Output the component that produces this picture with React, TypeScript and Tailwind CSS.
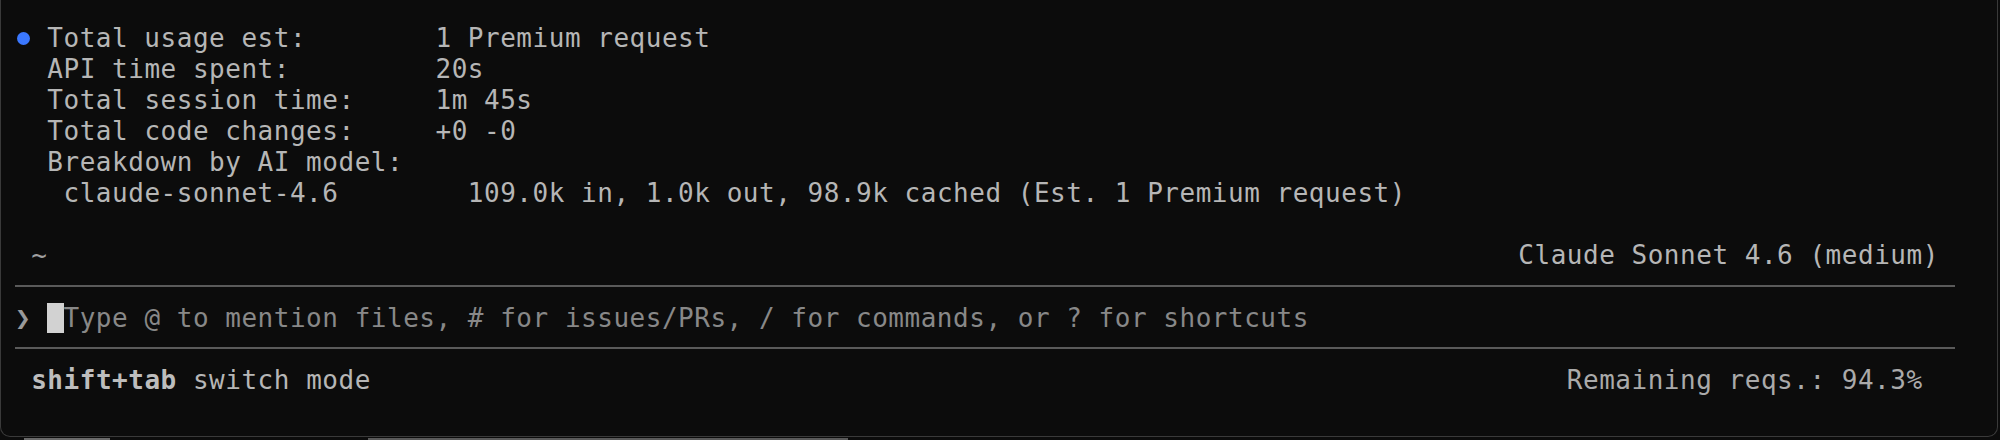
import React from "react";

const Row = ({ children, className = "" }: { children?: React.ReactNode; className?: string }) => (
  <div className={`flex h-[31.07px] w-[1940px] items-center pt-[8px] ${className}`}>{children}</div>
);

const Sep = () => (
  <div className="flex h-[31.07px] w-[1940px] items-center pt-[6px]">
    <div className="h-[2px] w-full bg-[#5a5a5a]" />
  </div>
);

const stat = (label: string, value = "") => "  " + label.padEnd(24) + value;

export default function App() {
  return (
    <div className="flex h-[440px] w-[2000px] flex-col overflow-hidden bg-[#0c0c0c]">
      <div className="h-[437px] w-[1998px] rounded-b-[10px] border-x border-b border-[#3a3a3a] bg-[#0c0c0c] pl-[14px] pt-[19px] font-['DejaVu_Sans_Mono','DejaVu_Sans',monospace] text-[26px] leading-[31px] tracking-[0.52px] whitespace-pre text-[#b6b6b6]">
        <Row>
          <span className="flex h-[31px] w-[16.17px] items-center justify-center">
            <span className="h-[13px] w-[13px] rounded-full bg-[#3b78ff]" />
          </span>
          <span>{" " + "Total usage est:".padEnd(24) + "1 Premium request"}</span>
        </Row>
        <Row>{stat("API time spent:", "20s")}</Row>
        <Row>{stat("Total session time:", "1m 45s")}</Row>
        <Row>{stat("Total code changes:", "+0 -0")}</Row>
        <Row>{stat("Breakdown by AI model:")}</Row>
        <Row>{"   " + "claude-sonnet-4.6".padEnd(25) + "109.0k in, 1.0k out, 98.9k cached (Est. 1 Premium request)"}</Row>
        <Row />
        <Row className="justify-between">
          <span className="text-[#a0a0a0]">{" ~"}</span>
          <span>{"Claude Sonnet 4.6 (medium) "}</span>
        </Row>
        <Sep />
        <Row>
          <span className="font-bold text-[#9a9a9a]">{"❯ "}</span>
          <span className="h-[30px] w-[16.17px] bg-[#d2d2d2]" />
          <span className="text-[#888888]">{"Type @ to mention files, # for issues/PRs, / for commands, or ? for shortcuts"}</span>
        </Row>
        <Sep />
        <Row className="justify-between">
          <span>
            {" "}
            <span className="font-bold text-[#bdbdbd]">shift+tab</span>
            {" switch mode"}
          </span>
          <span className="text-[#aaaaaa]">{"Remaining reqs.: 94.3%  "}</span>
        </Row>
        <Row />
      </div>
      <div className="flex h-[3px] w-[2000px] items-end bg-[#0c0c0c]">
        <div className="ml-[24px] h-[2px] w-[86px] bg-[#6a6a6a]" />
        <div className="ml-[258px] h-[2px] w-[480px] bg-[#5a5a5a]" />
      </div>
    </div>
  );
}
